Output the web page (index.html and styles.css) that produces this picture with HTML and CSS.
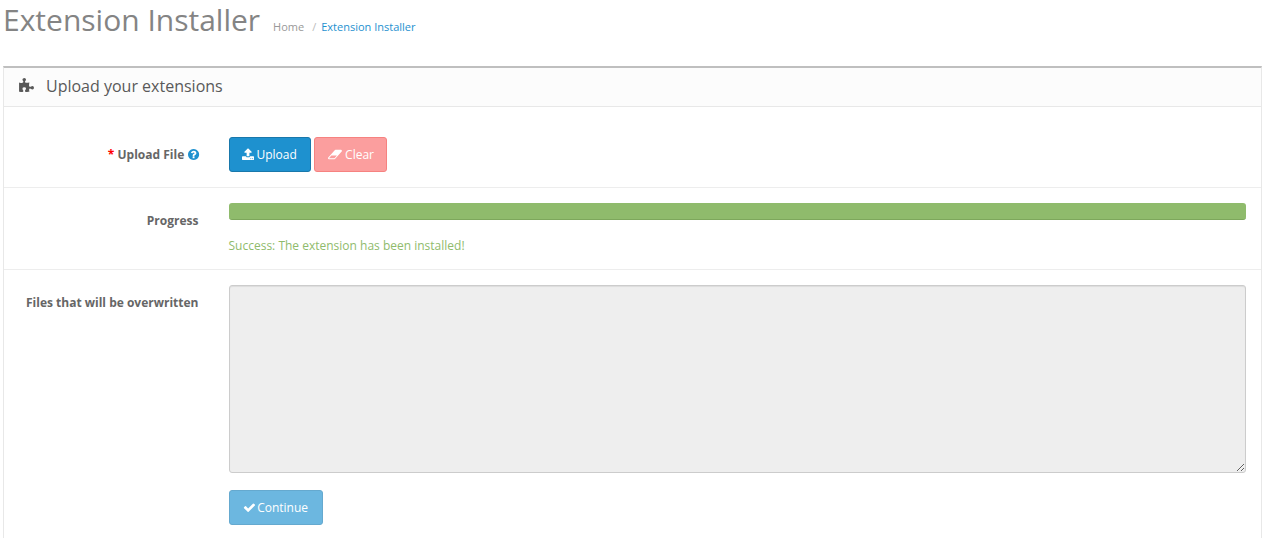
FILE: index.html
```html
<!DOCTYPE html>
<html lang="en">
<head>
<meta charset="utf-8">
<title>Extension Installer</title>
<link rel="stylesheet" href="styles.css">
</head>
<body>
<div class="page">
  <header class="page-header">
    <h1>Extension Installer</h1>
    <ul class="breadcrumb">
      <li><a class="crumb-home" href="#">Home</a></li>
      <li class="sep">/</li>
      <li><a class="crumb-current" href="#">Extension Installer</a></li>
    </ul>
  </header>
  <section class="panel">
    <div class="panel-heading">
      <svg class="icon icon-heading" viewBox="0 0 1664 1792"><path d="M1664 1098q0 81-44.500 135t-123.500 54q-41 0-77.500-17.500t-59-38-56.500-38-71-17.500q-110 0-110 124 0 39 16 115t15 115v5q-22 0-33 1-34 3-97.500 11.500t-115.500 13.500-98 5q-61 0-103-26.500t-42-83.500q0-37 17.500-71t38-56.500 38-59 17.500-77.500q0-79-54-123.500t-135-44.500q-84 0-143 45.500t-59 127.500q0 43 15 83t33.500 64.500 33.500 53 15 50.500q0 45-46 89-37 35-117 35-95 0-245-24-9-2-27.500-4t-27.500-4l-13-2q-2 0-4-1-2 0-2-1v-1024q2 1 17.500 3.500t34 5 21.500 3.500q150 24 245 24 80 0 117-35 46-44 46-89 0-22-15-50.500t-33.500-53-33.500-64.500-15-83q0-82 59-127.500t144-45.500q80 0 134 44.500t54 123.500q0 41-17.500 77.500t-38 59-38 56.500-17.500 71q0 57 42 83.500t103 26.500q64 0 180-15t163-17v2q-1 2-3.500 17.500t-5 34-3.500 21.500q-24 150-24 245 0 80 35 117 44 46 89 46 22 0 50.500-15t53-33.500 64.500-33.500 83-15q82 0 127.500 59t45.500 143z"/></svg>
      <h3>Upload your extensions</h3>
    </div>
    <div class="panel-body">
      <div class="form-group row-upload">
        <label class="control-label"><span class="req">*</span> Upload File <svg class="icon icon-help" viewBox="0 0 1536 1792"><path transform="translate(-128 0)" d="M1024 1376v-192q0-14-9-23t-23-9h-192q-14 0-23 9t-9 23v192q0 14 9 23t23 9h192q14 0 23-9t9-23zm256-672q0-88-55.500-163t-138.500-116-170-41q-243 0-371 213-15 24 8 42l132 100q7 6 19 6 16 0 25-12 53-68 86-92 34-24 86-24 48 0 85.500 26t37.500 59q0 38-20 61t-68 45q-63 28-115.500 86.500t-52.500 125.500v36q0 14 9 23t23 9h192q14 0 23-9t9-23q0-19 21.500-49.500t54.500-49.500q32-18 49-28.500t46-35 44.500-48 28-60.500 12.500-81zm384 192q0 209-103 385.500t-279.500 279.500-385.500 103-385.500-103-279.500-279.500-103-385.500 103-385.500 279.500-279.500 385.500-103 385.500 103 279.500 279.500 103 385.500z"/></svg></label>
        <div class="controls buttons">
          <button class="btn btn-primary" type="button"><svg class="icon icon-btn" viewBox="0 0 1664 1792"><path transform="translate(-64 0)" d="M1344 1472q0-26-19-45t-45-19-45 19-19 45 19 45 45 19 45-19 19-45zm256 0q0-26-19-45t-45-19-45 19-19 45 19 45 45 19 45-19 19-45zm128-224v320q0 40-28 68t-68 28h-1472q-40 0-68-28t-28-68v-320q0-40 28-68t68-28h427q21 56 70.500 92t110.500 36h256q61 0 110.500-36t70.500-92h427q40 0 68 28t28 68zm-325-648q-17 40-59 40h-256v448q0 26-19 45t-45 19h-256q-26 0-45-19t-19-45v-448h-256q-42 0-59-40-17-39 14-69l448-448q18-19 45-19t45 19l448 448q31 30 14 69z"/></svg> Upload</button>
          <button class="btn btn-danger" type="button"><svg class="icon icon-eraser" viewBox="0 0 1920 1792"><path transform="translate(-64 0)" d="M960 1408l336-384h-768l-336 384h768zm1013-1077q15 34 9.500 71.500t-30.500 65.500l-896 1024q-38 44-96 44h-768q-38 0-69.500-20.500t-47.500-54.500q-15-34-9.500-71.500t30.500-65.500l896-1024q38-44 96-44h768q38 0 70 20.500t47 54.500z"/></svg> Clear</button>
        </div>
      </div>
      <div class="form-group row-progress">
        <label class="control-label">Progress</label>
        <div class="controls">
          <div class="progress"></div>
          <p class="success">Success: The extension has been installed!</p>
        </div>
      </div>
      <div class="form-group row-files">
        <label class="control-label">Files that will be overwritten</label>
        <div class="controls">
          <textarea class="overwrite" disabled></textarea>
          <button class="btn btn-continue" type="button"><svg class="icon icon-btn" viewBox="0 0 1664 1792"><path transform="translate(-7 0)" d="M1671 566q0 40-28 68l-724 724-136 136q-28 28-68 28t-68-28l-136-136-362-362q-28-28-28-68t28-68l136-136q28-28 68-28t68 28l294 295 656-657q28-28 68-28t68 28l136 136q28 28 28 68z"/></svg> Continue</button>
        </div>
      </div>
    </div>
  </section>
</div>
</body>
</html>
```

FILE: styles.css
```css
* { box-sizing: border-box; }
html, body { margin: 0; height: 538px; overflow: hidden; background: #fff; }
body { font-family: "Open Sans", sans-serif; font-size: 12px; line-height: 18px; color: #666; }
.page { padding: 0 1px 0 3px; }

.page-header { display: flex; align-items: baseline; height: 66px; }
h1 { margin: 0; font-size: 30px; font-weight: 400; line-height: 39px; color: #848484; }
.breadcrumb { display: flex; list-style: none; margin: 0 0 0 13px; padding: 0; font-size: 11px; }
.breadcrumb a { text-decoration: none; }
.crumb-home { color: #999; }
.crumb-current { color: #1e91cf; }
.sep { color: #bbb; margin: 0 5px 0 8px; }

.panel { border: 1px solid #e8e8e8; border-top: 2px solid #bfbfbf; height: 600px; }
.panel-heading { display: flex; align-items: center; height: 39px; padding: 0 0 2px 15px; background: #fcfcfc; border-bottom: 1px solid #e8e8e8; }
.panel-heading h3 { margin: 0; font-size: 16px; font-weight: 400; color: #595959; line-height: 18px; }
.icon { display: inline-block; width: auto; height: 12px; fill: currentColor; vertical-align: -1px; }
.icon-heading { height: 16px; width: 15px; margin-right: 12px; color: #595959; }
.icon-help { height: 13px; margin: 0 -1px 0 1px; color: #1e91cf; vertical-align: -2px; }
.icon-btn { height: 13px; margin-right: -1px; vertical-align: -2px; }
.icon-eraser { height: 13px; vertical-align: -2px; }

.form-group { display: grid; grid-template-columns: 16.6667% 83.3333%; padding: 15px 0; border-bottom: 1px solid #ededed; }
.row-files { border-bottom: 0; }
.control-label { padding: 9px 15px 0; text-align: right; font-weight: 700; font-size: 12px; color: #666; }
.req { color: #f00; }
.controls { padding: 0 15px; }
.row-upload { padding-top: 30px; }
.buttons { display: flex; gap: 3px; }

.btn { height: 35px; padding: 0; font: 400 12px/18px "Open Sans", sans-serif; color: #fff; border: 1px solid; border-radius: 3px; }
.btn-primary { width: 82px; background: #1e91cf; border-color: #1978ab; }
.btn-danger { width: 73px; padding-left: 2px; background: #fb9e9e; border-color: #f68280; }
.btn-continue { display: block; margin-top: 17px; width: 94px; background: #6cb7e0; border-color: #65a9cf; }

.progress { height: 17px; background: #8fbb6c; border-bottom: 1px solid #7da75c; border-radius: 3px; }
.success { margin: 17px 0 0; color: #8fbb6c; line-height: 17px; }
.overwrite { display: block; width: 100%; height: 188px; padding: 8px 13px; background: #eee; border: 1px solid #ccc; border-radius: 3px; box-shadow: inset 0 1px 1px rgba(0,0,0,.075); }
```
